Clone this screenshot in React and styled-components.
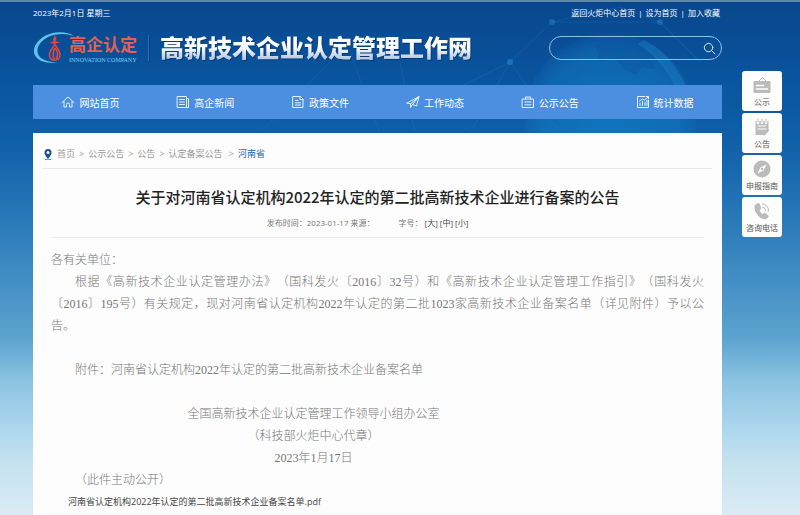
import React from "react";
import styled, { createGlobalStyle } from "styled-components";

const GlobalStyle = createGlobalStyle`
  * {
    box-sizing: border-box;
  }
  body {
    margin: 0;
    font-family: "Open Sans", "Noto Sans CJK SC", sans-serif;
    font-size: 8px;
    color: #666;
  }
  a {
    color: inherit;
    text-decoration: none;
  }
`;

const Page = styled.div`
  position: relative;
  display: flex;
  gap: 20px;
  min-height: 100vh;
  padding: 0 18px 0 33px;
  border-top: 2px solid #5d86ab;
  background: linear-gradient(
    #08478d 0,
    #0a559f 80px,
    #1060a8 140px,
    #1d70b2 190px,
    #3583be 245px,
    #5ba3cf 335px,
    #8cc4e1 380px,
    #abd6ed 425px,
    #c4e2ef 460px,
    #d9ebf4 513px
  );
`;

const Globe = styled.svg`
  position: absolute;
  top: 0;
  right: 60px;
  width: 480px;
  height: 131px;
`;

const Main = styled.main`
  position: relative;
  flex: 1;
  display: flex;
  flex-direction: column;
`;

const TopBar = styled.div`
  display: flex;
  justify-content: space-between;
  height: 22px;
  line-height: 22px;
  color: #fff;
`;

const TopLinks = styled.div`
  display: flex;
  gap: 3px;
  padding-right: 2px;
`;

const Header = styled.header`
  display: flex;
  align-items: center;
  height: 48px;
`;

const Logo = styled.a`
  display: flex;
  align-items: center;
  height: 36px;
  padding-right: 11px;
`;

const LogoText = styled.div`
  margin-left: -6px;
`;

const LogoName = styled.div`
  font-size: 17px;
  line-height: 24px;
  font-weight: 700;
  color: #e4604f;
`;

const LogoSub = styled.div`
  font-family: "Liberation Serif", serif;
  font-size: 6px;
  line-height: 6px;
  color: #74d3f7;
`;

const SiteTitle = styled.h1`
  margin: 0;
  padding-left: 11px;
  border-left: 1px solid #2c72b2;
  font-size: 24px;
  line-height: 26px;
  font-weight: 900;
  white-space: nowrap;
  color: transparent;
  background: linear-gradient(#fff 45%, #b9cbe0 90%);
  background-clip: text;
  filter: drop-shadow(1px 1px 0 #063a75);
`;

const Search = styled.form`
  display: flex;
  align-items: center;
  width: 173px;
  height: 24px;
  margin-left: auto;
  padding: 0 5px 0 12px;
  border: 1px solid #8fc0e8;
  border-radius: 12px;
`;

const SearchInput = styled.input`
  flex: 1;
  min-width: 0;
  border: 0;
  outline: 0;
  background: transparent;
  color: #fff;
  font: inherit;
`;

const SearchButton = styled.button`
  display: flex;
  padding: 0;
  border: 0;
  background: transparent;
  cursor: pointer;
`;

const Nav = styled.nav`
  display: flex;
  height: 34px;
  margin-top: 13px;
  background: #4c8fe1;
`;

const NavItem = styled.a`
  flex: 1;
  display: flex;
  align-items: center;
  justify-content: center;
  gap: 4px;
  font-size: 10px;
  color: #fff;
`;

const Icon = styled.svg.attrs({ "aria-hidden": true })`
  width: ${(p) => p.$size || 14}px;
  height: ${(p) => p.$size || 14}px;
  fill: none;
  stroke: ${(p) => p.$color || "#e3f0ff"};
  stroke-linecap: round;
  stroke-linejoin: round;
`;

const Article = styled.article`
  flex: 1;
  margin-top: 14px;
  padding: 6px 10px 0;
  background: #fdfdfd;
`;

const Crumbs = styled.div`
  display: flex;
  align-items: center;
  gap: 4px;
  height: 30px;
  border-bottom: 1px solid #e9e9e9;
  font-size: 9px;
  color: #999;
`;

const Current = styled.span`
  color: #2b62ab;
`;

const Title = styled.h2`
  margin: 16px 0 0;
  font-family: "Noto Sans CJK SC", sans-serif;
  font-size: 15px;
  line-height: 24px;
  font-weight: 500;
  text-align: center;
  color: #222;
`;

const Inner = styled.div`
  margin: 0 8px;
`;

const Meta = styled.div`
  display: flex;
  justify-content: center;
  gap: 24px;
  padding: 8px 20px 8px 0;
  margin-bottom: 11px;
  border-bottom: 1px solid #ececec;
  line-height: 12px;
  color: #777;
`;

const SizeLink = styled.a`
  margin-left: 2px;
  color: #444;
`;

const Text = styled.div`
  font-family: "Liberation Serif", "Noto Sans CJK SC", serif;
  font-size: 12px;
  line-height: 22px;
  font-weight: 300;
  text-spacing-trim: space-all;
  color: #777;
`;

const Para = styled.p`
  margin: 0 0 ${(p) => (p.$gap ? 22 : 0)}px;
  text-indent: ${(p) => (p.$flush ? 0 : 2)}em;
  text-align: justify;
`;

const Sign = styled.div`
  padding-right: 128px;
  text-align: center;
`;

const FileLink = styled.a`
  display: block;
  padding-left: 17px;
  font-size: 9px;
  line-height: 22px;
  color: #444;
`;

const Side = styled.aside`
  position: relative;
  display: flex;
  flex-direction: column;
  gap: 2px;
  width: 40px;
  padding-top: 69px;
`;

const SideCard = styled.a`
  display: flex;
  flex-direction: column;
  align-items: center;
  justify-content: center;
  gap: 2px;
  height: 40px;
  padding-top: 2px;
  border-radius: 3px;
  background: #fdfdfd;
  line-height: 12px;
  white-space: nowrap;
  color: #555;
`;

const navItems = [
  {
    label: "网站首页",
    icon: <path d="M1 7.500 7 2l6 5.500M3 6.500V12h2.500V9.500a1.500 1.500 0 0 1 3 0V12H11V6.500" />,
  },
  {
    label: "高企新闻",
    icon: <path d="M1.500 1.500h9v11h-9zM10.500 3.500h2v9h-2M3.500 4.500h5M3.500 7h5M3.500 9.500h5" />,
  },
  {
    label: "政策文件",
    icon: <path d="M2 1.500h7.500L12 4v8.500H2zM9 1.500v3h3M4.500 5.500H7M4.500 7.800h5M4.500 10h5" />,
  },
  {
    label: "工作动态",
    icon: <path d="M1 8 13 1.500 10.500 11 6.500 9.500 4.500 12.500V9zM4.500 9 13 1.500 6.500 9.500" />,
  },
  {
    label: "公示公告",
    icon: <path d="M1.500 4h11v8.500h-11zM4.500 4V2h5v2M4 7h6M4 9.800h6" />,
  },
  {
    label: "统计数据",
    icon: <path d="M9 1.500H1.500v11h11V5M4 10.500V8M6.500 10.500V6.500M9 10.500V7.500M11 10.500V5M3.500 6 6.500 4 8.500 5.200 12.500 1.500M10.500 1.500h2v2" />,
  },
];

const sideItems = [
  {
    label: "公示",
    icon: (
      <>
        <path d="M5 6 9.500 1.500 14 6" stroke="#bbb" />
        <rect x="0.500" y="5" width="17" height="12" rx="1" fill="#bbb" />
        <path d="M3.500 9.500h7M3.500 13h11" stroke="#fff" strokeWidth="1.500" />
      </>
    ),
  },
  {
    label: "公告",
    icon: (
      <>
        <path d="M2.500 3h13v9l-4 5h-9z" fill="#bbb" />
        <path d="M5 1v4M9 1v4M13 1v4" stroke="#fff" strokeWidth="2.500" />
        <path d="M5 1v3M9 1v3M13 1v3" stroke="#bbb" />
        <path d="M5 8h8M5 11h8" stroke="#fff" />
        <path d="m11 16.500 4-4" stroke="#bbb" strokeWidth="2" />
      </>
    ),
  },
  {
    label: "申报指南",
    icon: (
      <>
        <circle cx="9" cy="9" r="8.500" fill="#bbb" />
        <path d="m13.500 4.500-3 6-6 3 3-6z" fill="#fff" />
        <circle cx="9" cy="9" r="1.200" fill="#bbb" />
      </>
    ),
  },
  {
    label: "咨询电话",
    icon: (
      <>
        <path
          d="M4.500 2 2.500 3.500C1 8 6 15.500 11 16.500c2 .3 4-1.500 4-2.500l-3.500-2.500L9.500 13C8 12 6 9.500 5.500 8L7.500 6.500 6 2z"
          fill="#bbb"
          stroke="#bbb"
          strokeWidth="1.500"
        />
        <path d="M9.500 2A6 6 0 0 1 15.500 9M9.500 5A3.500 3.500 0 0 1 12.500 8.500" stroke="#bbb" />
      </>
    ),
  },
];

const App = () => {
  return (
    <>
      <GlobalStyle />
      <Page>
        <Globe viewBox="0 0 480 131" aria-hidden="true">
          <defs>
            <radialGradient id="globe">
              <stop offset="0" stopColor="#1285cc" stopOpacity="0.55" />
              <stop offset="0.8" stopColor="#1488cf" stopOpacity="0.35" />
              <stop offset="1" stopColor="#1488cf" stopOpacity="0.08" />
            </radialGradient>
          </defs>
          <circle cx="350" cy="118" r="86" fill="url(#globe)" />
          <path d="M336 44l14-6 22-2 24 8 8 10-12 3 4 10-14-2-6 8-12-6-8-10-16 2z" fill="#0b569f" opacity="0.5" />
          <path d="M384 38q36 18 48 64l-9 2q-14-42-45-62z" fill="#25a0de" opacity="0.25" />
          <path
            d="M0 131 70 60M120 131 90 50M155 131 140 60M300 131 250 60 292 20 360 5 400 20 440 60M250 60 190 90M250 60 210 131M292 20 400 20"
            fill="none"
            stroke="#2a8fd4"
            opacity="0.2"
          />
          <circle cx="250" cy="60" r="3" fill="#2a8fd4" opacity="0.5" />
          <circle cx="292" cy="20" r="3" fill="#2a8fd4" opacity="0.4" />
          <circle cx="400" cy="20" r="3" fill="#2a8fd4" opacity="0.4" />
        </Globe>

        <Main>
          <TopBar>
            <span>2023年2月1日 星期三</span>
            <TopLinks>
              <a href="#torch">返回火炬中心首页</a>
              <span>|</span>
              <a href="#home">设为首页</a>
              <span>|</span>
              <a href="#fav">加入收藏</a>
            </TopLinks>
          </TopBar>

          <Header>
            <Logo href="#index">
              <svg width="42" height="36" viewBox="0 0 42 36" fill="none" aria-hidden="true">
                <path
                  d="M41 6C30-1 9 2 2 16-3 28 10 35 24 32 11 32 2 27 5 17 10 5 28 1 41 6z"
                  fill="#5cc3ee"
                />
                <path d="M22 5 23.500 9l-1 2 5 1.500-5 1-1 2.500-1-2.500-4-.5 4-2-.5-2z" fill="#e2453b" />
                <path
                  d="M22 15c-4 4-5.500 7-5.500 10s2 5 5 5 5.500-2 5.500-5.500S25 19 22 15zM22 18c-2 3-2.500 9-.5 11.500M22 18c3 3 3.500 8 1 11"
                  stroke="#e2453b"
                  strokeWidth="1.600"
                />
              </svg>
              <LogoText>
                <LogoName>高企认定</LogoName>
                <LogoSub>INNOVATION COMPANY</LogoSub>
              </LogoText>
            </Logo>
            <SiteTitle>高新技术企业认定管理工作网</SiteTitle>
            <Search onSubmit={(e) => e.preventDefault()}>
              <SearchInput type="text" aria-label="搜索" />
              <SearchButton type="submit" aria-label="搜索">
                <Icon $size={13} viewBox="0 0 14 14">
                  <circle cx="6" cy="6" r="4.500" />
                  <path d="m9.500 9.500 3.500 3.500" />
                </Icon>
              </SearchButton>
            </Search>
          </Header>

          <Nav>
            {navItems.map((item) => (
              <NavItem href="#nav" key={item.label}>
                <Icon viewBox="0 0 14 14">{item.icon}</Icon>
                {item.label}
              </NavItem>
            ))}
          </Nav>

          <Article>
            <Crumbs>
              <svg width="10" height="12" viewBox="0 0 10 12" aria-hidden="true">
                <path d="M5 11C2 7.500 1.500 6 1.500 4.500a3.500 3.500 0 0 1 7 0C8.500 6 8 7.500 5 11z" fill="#174f9c" />
                <circle cx="5" cy="4.500" r="1.500" fill="#fff" />
                <path d="M2 11.500h6" stroke="#6d9bd0" />
              </svg>
              <a href="#index">首页</a>
              <span>&gt;</span>
              <a href="#gsgg">公示公告</a>
              <span>&gt;</span>
              <a href="#gg">公告</a>
              <span>&gt;</span>
              <a href="#ba">认定备案公告</a>
              <span>&nbsp;&gt;</span>
              <Current>河南省</Current>
            </Crumbs>

            <Title>关于对河南省认定机构2022年认定的第二批高新技术企业进行备案的公告</Title>

            <Inner>
              <Meta>
                <span>发布时间：2023-01-17 来源：</span>
                <span>
                  字号：
                  <SizeLink href="#big">[大]</SizeLink>
                  <SizeLink href="#mid">[中]</SizeLink>
                  <SizeLink href="#small">[小]</SizeLink>
                </span>
              </Meta>

              <Text>
                <Para $flush>各有关单位：</Para>
                <Para $gap>
                  根据《高新技术企业认定管理办法》（国科发火〔2016〕32号）和《高新技术企业认定管理工作指引》（国科发火〔2016〕195号）有关规定，现对河南省认定机构2022年认定的第二批1023家高新技术企业备案名单（详见附件）予以公告。
                </Para>
                <Para $gap>附件：河南省认定机构2022年认定的第二批高新技术企业备案名单</Para>
                <Sign>
                  全国高新技术企业认定管理工作领导小组办公室
                  <br />
                  （科技部火炬中心代章）
                  <br />
                  2023年1月17日
                </Sign>
                <Para>（此件主动公开）</Para>
              </Text>
              <FileLink href="#pdf">河南省认定机构2022年认定的第二批高新技术企业备案名单.pdf</FileLink>
            </Inner>
          </Article>
        </Main>

        <Side>
          {sideItems.map((item) => (
            <SideCard href="#side" key={item.label}>
              <Icon $size={18} $color="none" viewBox="0 0 18 18">
                {item.icon}
              </Icon>
              {item.label}
            </SideCard>
          ))}
        </Side>
      </Page>
    </>
  );
};

export default App;
